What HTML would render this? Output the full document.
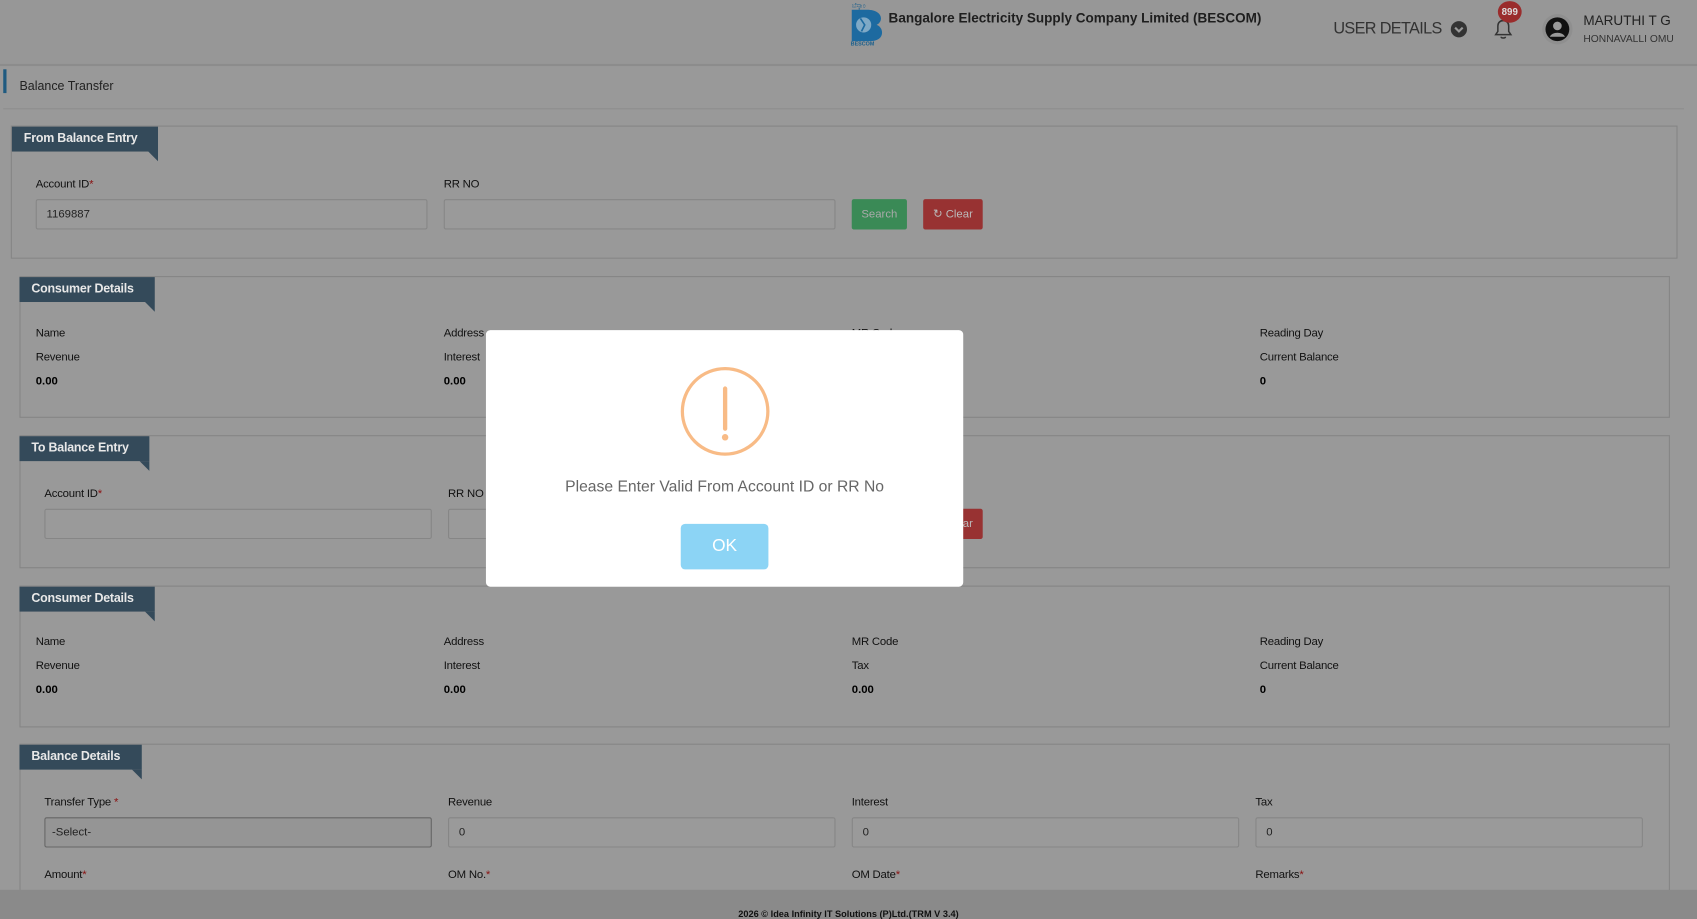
<!DOCTYPE html>
<html><head><meta charset="utf-8"><style>
html,body{margin:0;padding:0;width:1697px;height:919px;overflow:hidden;background:#999;}
#w{position:absolute;left:0;top:0;width:1568px;height:849px;overflow:hidden;transform:scale(1.08227,1.08245);transform-origin:0 0;font-family:"Liberation Sans",sans-serif;color:#111;background:#999;}
.a{position:absolute;}
.fs{position:absolute;border:1px solid #858585;}
.lg{position:absolute;background:#344a5a;color:#e8e8e8;font-weight:bold;font-size:11.5px;line-height:23px;padding-left:11px;box-sizing:border-box;letter-spacing:-0.2px;}
.lg:after{content:"";position:absolute;right:0;bottom:-9px;border-top:9px solid #344a5a;border-left:9px solid transparent;}
.lb{position:absolute;font-size:10.5px;color:#111;letter-spacing:-0.2px;}
.lb b{color:#8a1010;font-weight:normal;}
.v{position:absolute;font-size:10.5px;font-weight:bold;color:#000;}
.in{position:absolute;height:28px;box-sizing:border-box;border:1px solid #868686;border-radius:2px;background:#9a9a9a;font-size:10.5px;padding-left:9px;line-height:26px;color:#222;}
</style></head><body><div id="w">
<div class="a" style="left:0;top:0;width:1568px;height:59px;background:#979797;border-bottom:2px solid #8c8c8c;"></div>
<svg class="a" style="left:785px;top:1px" width="32" height="42" viewBox="0 0 32 42"><text x="2" y="6" font-size="6" fill="#1a5f8c" font-family="Liberation Sans">ಬೆಸ್ಕಾಂ</text><path d="M2 8h14c9 0 13 4 13 8 0 3-2 5-4 6 3 1 5 4 5 7 0 5-4 8-12 8H2z" fill="#1d6aa0"/><circle cx="13" cy="22" r="7" fill="#7fa9c6"/><path d="M10 16l4 6-3 6" stroke="#1d6aa0" stroke-width="1.5" fill="none"/><text x="1" y="41" font-size="5" font-weight="bold" fill="#1a5f8c" font-family="Liberation Sans">BESCOM</text></svg>
<div class="a" style="left:821px;top:10px;font-size:12.5px;font-weight:bold;color:#1e1e1e;">Bangalore Electricity Supply Company Limited (BESCOM)</div>
<div class="a" style="left:1232px;top:18px;font-size:15px;color:#333;letter-spacing:-0.6px;">USER DETAILS</div>
<svg class="a" style="left:1340px;top:19px" width="16" height="16"><circle cx="8" cy="8" r="7.5" fill="#333"/><path d="M4.5 6.5l3.5 3.5 3.5-3.5" stroke="#999" stroke-width="2" fill="none"/></svg>
<svg class="a" style="left:1378px;top:14px" width="22" height="24"><path d="M4 18h14l-2-3v-5c0-3-2-5-5-5s-5 2-5 5v5z" stroke="#333" stroke-width="1.4" fill="none"/><path d="M9 20c0 1.5 4 1.5 4 0" stroke="#333" stroke-width="1.4" fill="none"/></svg>
<div class="a" style="left:1384px;top:1px;width:22px;height:20px;border-radius:50%;background:#9a2c2c;color:#ddd;font-size:9px;font-weight:bold;text-align:center;line-height:20px;">899</div>
<div class="a" style="left:1425px;top:13px;width:28px;height:28px;border-radius:50%;background:#8f8f8f;"></div>
<svg class="a" style="left:1427px;top:15px" width="24" height="24"><circle cx="12" cy="12" r="11" fill="#111"/><circle cx="12" cy="9" r="4" fill="#999"/><path d="M5 19c2-5 12-5 14 0" fill="#999"/></svg>
<div class="a" style="left:1463px;top:12px;font-size:12.5px;color:#222;">MARUTHI T G</div>
<div class="a" style="left:1463px;top:31px;font-size:9.5px;color:#333;">HONNAVALLI OMU</div>
<div class="a" style="left:3px;top:62px;width:1553px;height:38px;border-bottom:1px solid #8d8d8d;"></div>
<div class="a" style="left:3px;top:64px;width:3px;height:22px;background:#1f5a80;"></div>
<div class="a" style="left:18px;top:74px;font-size:11.5px;color:#222;">Balance Transfer</div>
<div class="fs" style="left:10px;top:116px;width:1538px;height:121px;"></div>
<div class="lg" style="left:11px;top:117px;width:135px;">From Balance Entry</div>
<div class="lb" style="left:33px;top:164px;">Account ID<b>*</b></div>
<div class="lb" style="left:410px;top:164px;">RR NO</div>
<div class="in" style="left:33px;top:184px;width:362px;">1169887</div>
<div class="in" style="left:410px;top:184px;width:362px;"></div>
<div class="a" style="left:787px;top:184px;width:51px;height:28px;background:#3a8a56;border-radius:2px;color:#aaa;font-size:10.5px;text-align:center;line-height:28px;">Search</div>
<div class="a" style="left:853px;top:184px;width:55px;height:28px;background:#983232;border-radius:2px;color:#bbb;font-size:10.5px;text-align:center;line-height:28px;">&#x21bb; Clear</div>
<div class="fs" style="left:18px;top:255px;width:1523px;height:129px;"></div>
<div class="lg" style="left:18px;top:256px;width:125px;">Consumer Details</div>
<div class="lb" style="left:33px;top:302px;">Name</div><div class="lb" style="left:410px;top:302px;">Address</div><div class="lb" style="left:787px;top:302px;">MR Code</div><div class="lb" style="left:1164px;top:302px;">Reading Day</div>
<div class="lb" style="left:33px;top:324px;">Revenue</div><div class="lb" style="left:410px;top:324px;">Interest</div><div class="lb" style="left:787px;top:324px;">Tax</div><div class="lb" style="left:1164px;top:324px;">Current Balance</div>
<div class="v" style="left:33px;top:346px;">0.00</div><div class="v" style="left:410px;top:346px;">0.00</div><div class="v" style="left:787px;top:346px;">0.00</div><div class="v" style="left:1164px;top:346px;">0</div>
<div class="fs" style="left:18px;top:402px;width:1523px;height:121px;"></div>
<div class="lg" style="left:18px;top:403px;width:120px;">To Balance Entry</div>
<div class="lb" style="left:41px;top:450px;">Account ID<b>*</b></div>
<div class="lb" style="left:414px;top:450px;">RR NO</div>
<div class="in" style="left:41px;top:470px;width:358px;"></div>
<div class="in" style="left:414px;top:470px;width:358px;"></div>
<div class="a" style="left:787px;top:470px;width:51px;height:28px;background:#3a8a56;border-radius:2px;"></div>
<div class="a" style="left:853px;top:470px;width:55px;height:28px;background:#983232;border-radius:2px;color:#bbb;font-size:10.5px;text-align:center;line-height:28px;">&#x21bb; Clear</div>
<div class="fs" style="left:18px;top:541px;width:1523px;height:129px;"></div>
<div class="lg" style="left:18px;top:542px;width:125px;">Consumer Details</div>
<div class="lb" style="left:33px;top:587px;">Name</div><div class="lb" style="left:410px;top:587px;">Address</div><div class="lb" style="left:787px;top:587px;">MR Code</div><div class="lb" style="left:1164px;top:587px;">Reading Day</div>
<div class="lb" style="left:33px;top:609px;">Revenue</div><div class="lb" style="left:410px;top:609px;">Interest</div><div class="lb" style="left:787px;top:609px;">Tax</div><div class="lb" style="left:1164px;top:609px;">Current Balance</div>
<div class="v" style="left:33px;top:631px;">0.00</div><div class="v" style="left:410px;top:631px;">0.00</div><div class="v" style="left:787px;top:631px;">0.00</div><div class="v" style="left:1164px;top:631px;">0</div>
<div class="fs" style="left:18px;top:687px;width:1523px;height:150px;"></div>
<div class="lg" style="left:18px;top:688px;width:113px;">Balance Details</div>
<div class="lb" style="left:41px;top:735px;">Transfer Type <b>*</b></div><div class="lb" style="left:414px;top:735px;">Revenue</div><div class="lb" style="left:787px;top:735px;">Interest</div><div class="lb" style="left:1160px;top:735px;">Tax</div>
<div class="in" style="left:41px;top:755px;width:358px;background:#959595;border-color:#666;padding-left:6px;">-Select-</div>
<div class="in" style="left:414px;top:755px;width:358px;">0</div>
<div class="in" style="left:787px;top:755px;width:358px;">0</div>
<div class="in" style="left:1160px;top:755px;width:358px;">0</div>
<div class="lb" style="left:41px;top:802px;">Amount<b>*</b></div><div class="lb" style="left:414px;top:802px;">OM No.<b>*</b></div><div class="lb" style="left:787px;top:802px;">OM Date<b>*</b></div><div class="lb" style="left:1160px;top:802px;">Remarks<b>*</b></div>
<div class="a" style="left:0;top:822px;width:1568px;height:27px;background:#8a8a8a;"></div>
<div class="a" style="left:0;top:839px;width:1568px;text-align:center;font-size:8.5px;font-weight:bold;color:#111;">2026 © Idea Infinity IT Solutions (P)Ltd.(TRM V 3.4)</div>
<div class="a" style="left:449px;top:305px;width:441px;height:237px;background:#fff;border-radius:4px;"></div>
<svg class="a" style="left:627px;top:337px" width="86" height="86"><circle cx="43" cy="43" r="39.5" stroke="#f8bb86" stroke-width="3" fill="none"/><line x1="43" y1="22" x2="43" y2="59" stroke="#f8bb86" stroke-width="4" stroke-linecap="round"/><circle cx="43" cy="67" r="3" fill="#f8bb86"/></svg>
<div class="a" style="left:449px;top:442px;width:441px;text-align:center;font-size:14.5px;color:#666;">Please Enter Valid From Account ID or RR No</div>
<div class="a" style="left:629px;top:484px;width:81px;height:42px;background:#8cd4f5;border-radius:4px;color:#fff;font-size:16px;text-align:center;line-height:42px;">OK</div>
</div></body></html>
